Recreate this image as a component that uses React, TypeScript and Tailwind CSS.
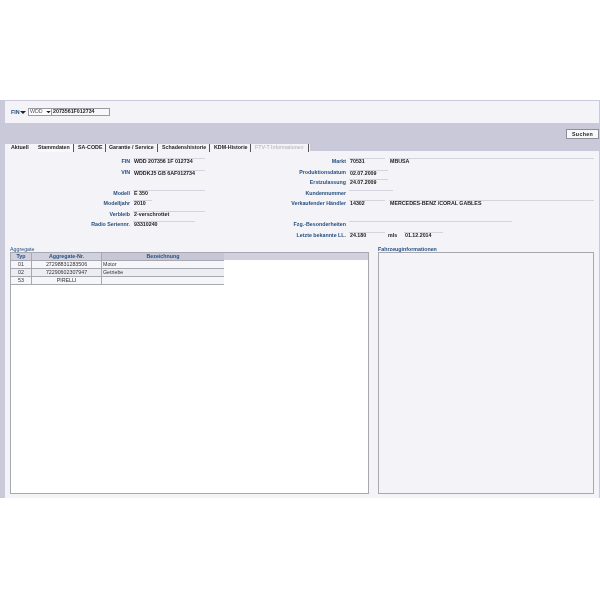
const label = 'text-[#27507f] text-right whitespace-nowrap';

function Value({ text, width, className = '' }: { text?: string; width: number; className?: string }) {
  return (
    <div
      className={`h-full border-t border-[#d4d4de] pl-px leading-[4px] whitespace-nowrap text-[#222] ${className}`}
      style={{ width }}
    >
      {text}
    </div>
  );
}

function Field({ name, labelWidth, children }: { name: string; labelWidth: number; children?: React.ReactNode }) {
  return (
    <div className="flex h-[10.5px] items-start">
      <div className={`${label} leading-[6px]`} style={{ width: labelWidth }}>
        {name}
      </div>
      <div className="ml-[3px] flex h-full">{children}</div>
    </div>
  );
}

const tabs = [
  { name: 'Aktuell', width: 33, pad: 6, line: false },
  { name: 'Stammdaten', width: 36, pad: 0, line: true },
  { name: 'SA-CODE', width: 32, pad: 4, line: true },
  { name: 'Garantie / Service', width: 52, pad: 3, line: true },
  { name: 'Schadenshistorie', width: 52, pad: 4, line: true },
  { name: 'KDM-Historie', width: 41, pad: 4, line: true },
  { name: 'FTV-T Informationen', width: 58, pad: 4, line: true },
];

const rows = [
  ['01', '27298831283506', 'Motor'],
  ['02', '72290602307947', 'Getriebe'],
  ['53', 'PIRELLI', ''],
];

export default function App() {
  return (
    <div className="h-[600px] w-[600px] overflow-hidden bg-white pt-[100px] text-[5.3px] font-bold [font-family:'Liberation_Sans',Arial,sans-serif] blur-[0.35px]">
      <div className="h-[398px] border-t border-[#c9c9da] bg-[#c9c9da] pr-[1px] pl-[5px]">
        {/* Search bar */}
        <div className="flex h-[22px] items-start bg-[#f3f3f8] pt-[7px] pl-[6px]">
          <span className="h-[8px] w-[8px] leading-[8px] text-[#27507f]">FIN</span>
          <svg className="mt-[3px] ml-[1px]" width="6" height="4" viewBox="0 0 6 4">
            <path d="M0 0h6L3 3z" fill="#222" />
          </svg>
          <div className="ml-[2px] flex h-[8px] w-[82px] items-center border border-[#9a9aa2] bg-[#f8f8fa]">
            <div className="flex h-full w-[23px] items-center border-r border-[#9a9aa2] bg-white pl-[1px] font-normal text-[#555]">
              WDD
              <svg className="ml-[3px]" width="5" height="3" viewBox="0 0 6 4">
                <path d="M0 0h6L3 3z" fill="#222" />
              </svg>
            </div>
            <span className="pl-[1px] text-[#222]">2073561F012734</span>
          </div>
        </div>

        {/* Band with search button */}
        <div className="flex h-[21px] justify-end pt-[6px]">
          <button className="h-[10px] w-[33px] border border-[#8f8f98] bg-[#f8f8fa] leading-[8px] tracking-[0.3px] text-[#222]">
            Suchen
          </button>
        </div>

        {/* Tabs */}
        <div className="flex h-[7px] w-[305px] items-start bg-[#f3f3f8] leading-[7px] whitespace-nowrap text-[#222]">
          {tabs.map((tab, i) => (
            <div
              key={tab.name}
              className={`h-[8px] ${tab.line ? 'border-r border-[#555]' : ''} ${i === 6 ? 'font-normal text-[#aeaeb8]' : ''} ${i === 1 ? 'bg-[#f9f9fc]' : ''}`}
              style={{ width: tab.width, paddingLeft: tab.pad }}
            >
              {tab.name}
            </div>
          ))}
        </div>

        {/* Main panel */}
        <div className="h-[347px] bg-[#f3f3f8] pt-[7px] pl-[5px]">
          <div className="flex h-[88px]">
            <div className="w-[215px]">
              <Field name="FIN" labelWidth={120}><Value text="WDD 207356 1F 012734" width={72} /></Field>
              <Field name="VIN" labelWidth={120}><Value text="WDDKJ5 GB 6AF012734" width={72} className="mt-[1px]" /></Field>
              <div className="h-[10.5px]" />
              <Field name="Modell" labelWidth={120}><Value text="E 350" width={72} /></Field>
              <Field name="Modelljahr" labelWidth={120}><Value text="2010" width={19} /></Field>
              <Field name="Verbleib" labelWidth={120}><Value text="2-verschrottet" width={72} /></Field>
              <Field name="Radio Seriennr." labelWidth={120}><Value text="93310240" width={62} /></Field>
            </div>
            <div>
              <Field name="Markt" labelWidth={121}>
                <Value text="70531" width={36} />
                <Value text="MBUSA" width={205} className="ml-[4px]" />
              </Field>
              <Field name="Produktionsdatum" labelWidth={121}><Value text="02.07.2009" width={39} className="mt-[1px]" /></Field>
              <Field name="Erstzulassung" labelWidth={121}><Value text="24.07.2009" width={39} /></Field>
              <Field name="Kundennummer" labelWidth={121}><Value width={44} /></Field>
              <Field name="Verkaufender Händler" labelWidth={121}>
                <Value text="14302" width={36} />
                <Value text="MERCEDES-BENZ /CORAL GABLES" width={205} className="ml-[4px]" />
              </Field>
              <div className="h-[10.5px]" />
              <Field name="Fzg.-Besonderheiten" labelWidth={121}><Value width={163} /></Field>
              <Field name="Letzte bekannte LL." labelWidth={121}>
                <Value text="24.180" width={36} />
                <span className="ml-[3px] w-[8px] leading-[6px] text-[#222]">mls</span>
                <Value text="01.12.2014" width={39} className="ml-[8px]" />
              </Field>
            </div>
          </div>

          <div className="flex">
            {/* Aggregate */}
            <div className="w-[359px]">
              <div className="h-[6px] leading-[6px] font-normal text-[#27507f]">Aggregate</div>
              <div className="h-[242px] border border-[#a8a8b0] bg-white font-normal text-[#333]">
                <div className="flex h-[7px] w-full bg-[#d0d0de] leading-[7px] font-bold text-[#27507f]">
                  <div className="w-[21px] border-r border-[#a8a8b0] text-center">Typ</div>
                  <div className="w-[70px] border-r border-[#a8a8b0] text-center">Aggregate-Nr.</div>
                  <div className="w-[122px] bg-[#c6c6d6] text-center">Bezeichnung</div>
                </div>
                <div className="w-[213px] border-b border-[#a8a8b0]">
                  {rows.map((row, i) => (
                    <div
                      key={row[0]}
                      className={`flex h-[8px] border-t border-[#a8a8b0] leading-[6px] ${i === 1 ? 'bg-[#ececf3]' : 'bg-[#f6f6fa]'}`}
                    >
                      <div className="w-[21px] border-r border-[#a8a8b0] text-center">{row[0]}</div>
                      <div className="w-[70px] border-r border-[#a8a8b0] text-center">{row[1]}</div>
                      <div className="pl-[1px]">{row[2]}</div>
                    </div>
                  ))}
                </div>
              </div>
            </div>

            {/* Fahrzeuginformationen */}
            <div className="ml-[9px] w-[216px]">
              <div className="h-[6px] leading-[6px] text-[#27507f]">Fahrzeuginformationen</div>
              <div className="h-[242px] border border-[#a8a8b0] bg-[#f3f3f8]" />
            </div>
          </div>
        </div>
      </div>
    </div>
  );
}
